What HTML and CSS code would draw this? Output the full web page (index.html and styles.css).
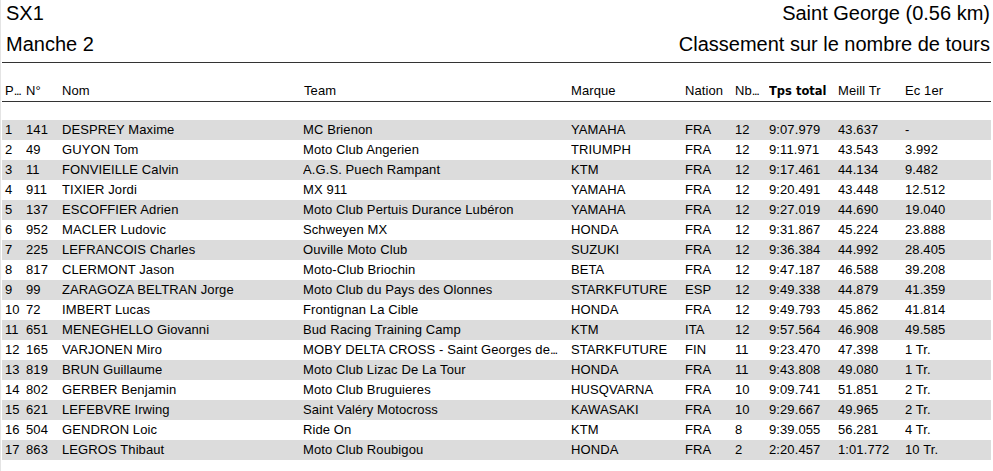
FILE: index.html
```html
<!DOCTYPE html>
<html lang="fr">
<head>
<meta charset="utf-8">
<title>SX1 - Manche 2</title>
<link rel="stylesheet" href="styles.css">
</head>
<body>
<div class="page">
  <div class="titles">
    <div class="title-row first"><span>SX1</span><span>Saint George (0.56 km)</span></div>
    <div class="title-row second"><span>Manche 2</span><span>Classement sur le nombre de tours</span></div>
  </div>
  <div class="row head">
    <div>P<span class="dots">...</span></div><div>N°</div><div>Nom</div><div class="team-h">Team</div><div>Marque</div><div>Nation</div><div>Nb<span class="dots">...</span></div><div class="bold">Tps total</div><div>Meill Tr</div><div>Ec 1er</div>
  </div>
  <div class="rows">
    <div class="row"><div>1</div><div>141</div><div>DESPREY Maxime</div><div>MC Brienon</div><div>YAMAHA</div><div>FRA</div><div>12</div><div>9:07.979</div><div>43.637</div><div>-</div></div>
    <div class="row"><div>2</div><div>49</div><div>GUYON Tom</div><div>Moto Club Angerien</div><div>TRIUMPH</div><div>FRA</div><div>12</div><div>9:11.971</div><div>43.543</div><div>3.992</div></div>
    <div class="row"><div>3</div><div>11</div><div>FONVIEILLE Calvin</div><div>A.G.S. Puech Rampant</div><div>KTM</div><div>FRA</div><div>12</div><div>9:17.461</div><div>44.134</div><div>9.482</div></div>
    <div class="row"><div>4</div><div>911</div><div>TIXIER Jordi</div><div>MX 911</div><div>YAMAHA</div><div>FRA</div><div>12</div><div>9:20.491</div><div>43.448</div><div>12.512</div></div>
    <div class="row"><div>5</div><div>137</div><div>ESCOFFIER Adrien</div><div>Moto Club Pertuis Durance Lubéron</div><div>YAMAHA</div><div>FRA</div><div>12</div><div>9:27.019</div><div>44.690</div><div>19.040</div></div>
    <div class="row"><div>6</div><div>952</div><div>MACLER Ludovic</div><div>Schweyen MX</div><div>HONDA</div><div>FRA</div><div>12</div><div>9:31.867</div><div>45.224</div><div>23.888</div></div>
    <div class="row"><div>7</div><div>225</div><div>LEFRANCOIS Charles</div><div>Ouville Moto Club</div><div>SUZUKI</div><div>FRA</div><div>12</div><div>9:36.384</div><div>44.992</div><div>28.405</div></div>
    <div class="row"><div>8</div><div>817</div><div>CLERMONT Jason</div><div>Moto-Club Briochin</div><div>BETA</div><div>FRA</div><div>12</div><div>9:47.187</div><div>46.588</div><div>39.208</div></div>
    <div class="row"><div>9</div><div>99</div><div>ZARAGOZA BELTRAN Jorge</div><div>Moto Club du Pays des Olonnes</div><div>STARKFUTURE</div><div>ESP</div><div>12</div><div>9:49.338</div><div>44.879</div><div>41.359</div></div>
    <div class="row"><div>10</div><div>72</div><div>IMBERT Lucas</div><div>Frontignan La Cible</div><div>HONDA</div><div>FRA</div><div>12</div><div>9:49.793</div><div>45.862</div><div>41.814</div></div>
    <div class="row"><div>11</div><div>651</div><div>MENEGHELLO Giovanni</div><div>Bud Racing Training Camp</div><div>KTM</div><div>ITA</div><div>12</div><div>9:57.564</div><div>46.908</div><div>49.585</div></div>
    <div class="row"><div>12</div><div>165</div><div>VARJONEN Miro</div><div>MOBY DELTA CROSS - Saint Georges de<span class="dots">...</span></div><div>STARKFUTURE</div><div>FIN</div><div>11</div><div>9:23.470</div><div>47.398</div><div>1 Tr.</div></div>
    <div class="row"><div>13</div><div>819</div><div>BRUN Guillaume</div><div>Moto Club Lizac De La Tour</div><div>HONDA</div><div>FRA</div><div>11</div><div>9:43.808</div><div>49.080</div><div>1 Tr.</div></div>
    <div class="row"><div>14</div><div>802</div><div>GERBER Benjamin</div><div>Moto Club Bruguieres</div><div>HUSQVARNA</div><div>FRA</div><div>10</div><div>9:09.741</div><div>51.851</div><div>2 Tr.</div></div>
    <div class="row"><div>15</div><div>621</div><div>LEFEBVRE Irwing</div><div>Saint Valéry Motocross</div><div>KAWASAKI</div><div>FRA</div><div>10</div><div>9:29.667</div><div>49.965</div><div>2 Tr.</div></div>
    <div class="row"><div>16</div><div>504</div><div>GENDRON Loic</div><div>Ride On</div><div>KTM</div><div>FRA</div><div>8</div><div>9:39.055</div><div>56.281</div><div>4 Tr.</div></div>
    <div class="row"><div>17</div><div>863</div><div>LEGROS Thibaut</div><div>Moto Club Roubigou</div><div>HONDA</div><div>FRA</div><div>2</div><div>2:20.457</div><div>1:01.772</div><div>10 Tr.</div></div>
  </div>
</div>
</body>
</html>
```

FILE: styles.css
```css
html, body {
  margin: 0;
  padding: 0;
  background: #ffffff;
}
body {
  font-family: "Liberation Sans", Arial, sans-serif;
  color: #000000;
  border-left: 1px solid #e4e4e4;
  min-height: 471px;
  box-sizing: border-box;
}
.page {
  width: 989px;
  margin-left: 1px;
}
.titles {
  border-bottom: 1px solid #333333;
}
.title-row {
  display: flex;
  justify-content: space-between;
  font-size: 20px;
  padding: 0 1px 0 4px;
}
.title-row.first {
  height: 26px;
  line-height: 26px;
}
.title-row.second {
  height: 36px;
  line-height: 36px;
}
.row {
  display: grid;
  grid-template-columns: 24px 36px 241px 268px 114px 50px 34px 69px 67px 1fr;
  height: 20px;
  line-height: 20px;
  font-size: 13px;
  letter-spacing: 0.1px;
  white-space: nowrap;
}
.row > div {
  overflow: hidden;
}
.row > div:first-child {
  padding-left: 3px;
}
.dots {
  letter-spacing: -1.4px;
}
.head {
  height: 20px;
  padding-top: 18px;
  border-bottom: 1px solid #333333;
}
.head .team-h {
  padding-left: 1px;
}
.head .bold {
  font-family: "DejaVu Sans", Verdana, sans-serif;
  font-weight: bold;
  font-size: 11.5px;
  letter-spacing: 0;
}
.rows {
  padding-top: 18px;
}
.rows .row:nth-child(odd) {
  background: #dcdcdc;
}
```
